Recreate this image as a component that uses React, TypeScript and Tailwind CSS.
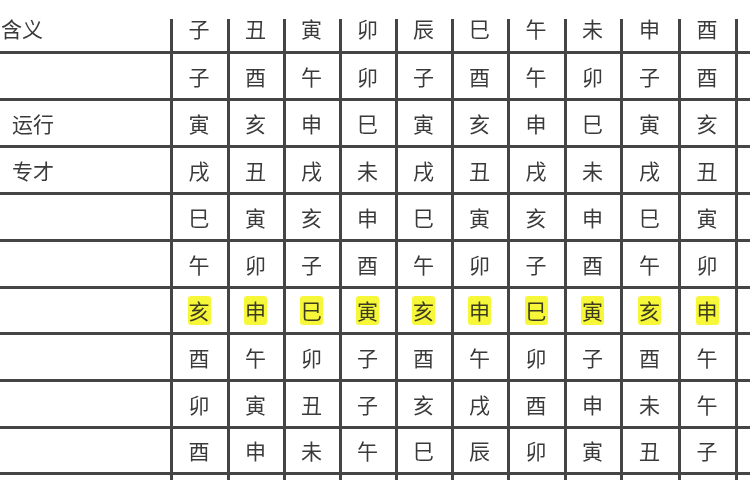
import React from "react";

const rows: { label: string; labelPad: string; cells: string[]; hl?: boolean }[] = [
  { label: "含义", labelPad: "pl-[1px]", cells: ["子", "丑", "寅", "卯", "辰", "巳", "午", "未", "申", "酉"] },
  { label: "", labelPad: "", cells: ["子", "酉", "午", "卯", "子", "酉", "午", "卯", "子", "酉"] },
  { label: "运行", labelPad: "pl-[12px]", cells: ["寅", "亥", "申", "巳", "寅", "亥", "申", "巳", "寅", "亥"] },
  { label: "专才", labelPad: "pl-[12px]", cells: ["戌", "丑", "戌", "未", "戌", "丑", "戌", "未", "戌", "丑"] },
  { label: "", labelPad: "", cells: ["巳", "寅", "亥", "申", "巳", "寅", "亥", "申", "巳", "寅"] },
  { label: "", labelPad: "", cells: ["午", "卯", "子", "酉", "午", "卯", "子", "酉", "午", "卯"] },
  { label: "", labelPad: "", hl: true, cells: ["亥", "申", "巳", "寅", "亥", "申", "巳", "寅", "亥", "申"] },
  { label: "", labelPad: "", cells: ["酉", "午", "卯", "子", "酉", "午", "卯", "子", "酉", "午"] },
  { label: "", labelPad: "", cells: ["卯", "寅", "丑", "子", "亥", "戌", "酉", "申", "未", "午"] },
  { label: "", labelPad: "", cells: ["酉", "申", "未", "午", "巳", "辰", "卯", "寅", "丑", "子"] },
];

const rowH = [
  "h-[48px]",
  "h-[47px]",
  "h-[47px]",
  "h-[47px]",
  "h-[47px]",
  "h-[47px]",
  "h-[46px]",
  "h-[47px]",
  "h-[47px]",
  "h-[46px]",
];

export default function App() {
  return (
    <div
      className="w-[750px] h-[500px] bg-white flex flex-col overflow-hidden text-[#3a3a3a] blur-[0.5px]"
      style={{ fontFamily: '"Noto Sans CJK SC", "Noto Sans", sans-serif' }}
    >
      <div className="h-[19px] shrink-0 bg-white" />
      <div className="flex-1 overflow-hidden">
        <div className="-mt-[13px] grid grid-cols-[173px_57px_56px_56px_56px_56px_56px_57px_56px_58px_57px_1fr]">
          {rows.map((r, ri) => (
            <React.Fragment key={ri}>
              <div
                className={`${rowH[ri]} border-b-[3px] border-r-[3px] border-[#454545] flex items-center text-[21px] leading-none ${r.labelPad}`}
              >
                {r.label}
              </div>
              {r.cells.map((c, ci) => (
                <div
                  key={ci}
                  className={`${rowH[ri]} border-b-[3px] border-r-[3px] border-[#454545] flex items-center justify-center text-[21px] leading-none`}
                >
                  {r.hl ? (
                    <span className="-ml-[2px] bg-[#f7f73a] px-[1px] py-[4px] rounded-[3px] text-[#3b3b20]">{c}</span>
                  ) : (
                    <span className="-ml-[2px]">{c}</span>
                  )}
                </div>
              ))}
              <div className={`${rowH[ri]} border-b-[3px] border-[#454545]`} />
            </React.Fragment>
          ))}
          <div className="h-[5px] border-r-[3px] border-[#454545]" />
          {Array.from({ length: 10 }).map((_, i) => (
            <div key={i} className="h-[5px] border-r-[3px] border-[#454545]" />
          ))}
          <div className="h-[5px]" />
        </div>
      </div>
    </div>
  );
}
